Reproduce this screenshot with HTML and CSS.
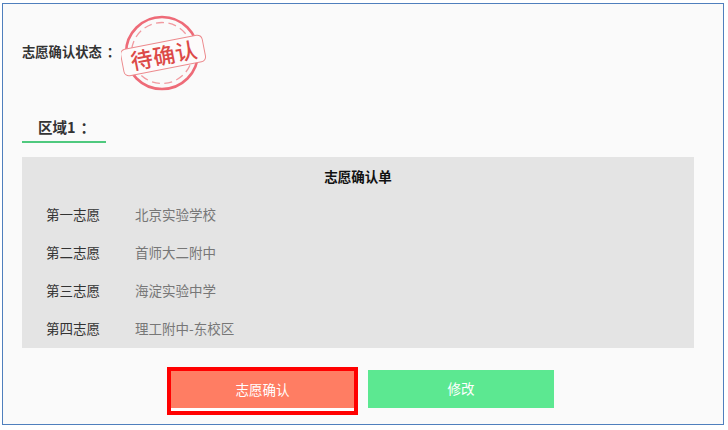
FILE: index.html
```html
<!DOCTYPE html>
<html lang="zh-CN">
<head>
<meta charset="utf-8">
<title>志愿确认</title>
<link rel="stylesheet" href="styles.css">
</head>
<body>
<main class="frame">
  <div class="status">
    <span class="status-label">志愿确认状态<span class="colon">：</span></span>
    <svg class="stamp" width="90" height="86" viewBox="0 0 90 86" aria-label="待确认">
      <circle cx="41" cy="40" r="36" fill="none" stroke="#ee6b78" stroke-width="2.6"/>
      <circle cx="41" cy="40" r="30.5" fill="none" stroke="#f19aa0" stroke-width="1.3" stroke-dasharray="8 4.5"/>
      <g transform="rotate(-11 42 42)">
        <rect x="0.5" y="29" width="83" height="27" rx="5" fill="#fdfbfb" stroke="#ec8a8d" stroke-width="1"/>
        <text x="43" y="51" class="stamp-text" text-anchor="middle">待确认</text>
      </g>
    </svg>
  </div>
  <h2 class="region">区域1<span class="colon">：</span></h2>
  <section class="sheet">
    <h3 class="sheet-title">志愿确认单</h3>
    <div class="row"><span class="rank">第一志愿</span><span class="school">北京实验学校</span></div>
    <div class="row"><span class="rank">第二志愿</span><span class="school">首师大二附中</span></div>
    <div class="row"><span class="rank">第三志愿</span><span class="school">海淀实验中学</span></div>
    <div class="row"><span class="rank">第四志愿</span><span class="school">理工附中-东校区</span></div>
  </section>
  <div class="actions">
    <div class="highlight"><button class="btn btn-confirm">志愿确认</button></div>
    <button class="btn btn-edit">修改</button>
  </div>
</main>
</body>
</html>
```
FILE: styles.css
```css
* { box-sizing: border-box; }
html, body { margin: 0; padding: 0; background: #fff; }
body {
  width: 728px;
  height: 430px;
  overflow: hidden;
  font-family: "Noto Sans CJK SC", "Liberation Sans", sans-serif;
}
.frame {
  width: 722px;
  height: 422px;
  margin: 3px 0 0 2px;
  border: 1px solid #4f7fbd;
  background: #fafafa;
  padding: 0 29px 0 19px;
}
.colon { margin-left: 5px; }
.status {
  display: flex;
  align-items: center;
  height: 94px;
}
.status-label {
  font-size: 13.3px;
  font-weight: 700;
  color: #333;
  width: 99px;
  flex: none;
  white-space: nowrap;
}
.stamp { flex: none; align-self: flex-start; margin-top: 9px; }
.stamp-text {
  font-size: 22px;
  font-weight: 500;
  letter-spacing: 0.5px;
  fill: #dc4a48;
  font-family: "Noto Sans CJK SC", sans-serif;
}
.region {
  margin: 13px 0 0;
  width: 84px;
  height: 32px;
  padding: 0 0 0 16px;
  font-size: 14.5px;
  line-height: 32px;
  font-weight: 700;
  color: #333;
  border-bottom: 2px solid #4fc97e;
  white-space: nowrap;
}
.sheet {
  margin-top: 14px;
  height: 191px;
  background: #e4e4e4;
  padding: 9px 24px 0;
}
.sheet-title {
  margin: 0;
  height: 21px;
  line-height: 21px;
  font-size: 13.5px;
  font-weight: 700;
  color: #111;
  text-align: center;
}
.row {
  display: flex;
  align-items: center;
  height: 38px;
  font-size: 13.5px;
}
.row:first-of-type { margin-top: 8px; }
.rank { width: 89px; color: #333; }
.school { color: #777; }
.actions {
  display: flex;
  align-items: flex-start;
  gap: 10px;
  margin-top: 19px;
  padding-left: 145px;
}
.highlight {
  width: 191px;
  height: 48px;
  border: 4px solid #ff0000;
  background: #fff;
}
.btn {
  display: block;
  border: 0;
  padding: 0 0 2px;
  height: 37px;
  font: inherit;
  font-size: 13.5px;
  color: #fff;
}
.btn-confirm { width: 183px; background: #ff7d63; }
.btn-edit { width: 186px; margin-top: 3px; height: 38px; background: #5ce891; }
```
